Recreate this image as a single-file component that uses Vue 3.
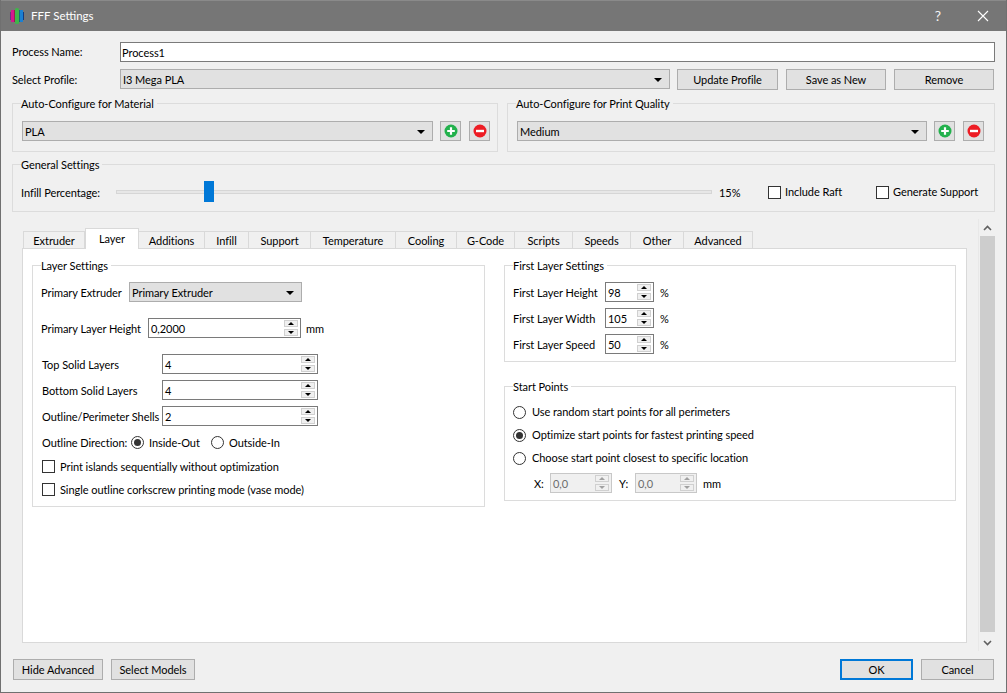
<script setup>
const tabs = [
  { label: 'Extruder', w: 62 }, { label: 'Layer', w: 54, active: true }, { label: 'Additions', w: 66 },
  { label: 'Infill', w: 44 }, { label: 'Support', w: 62 }, { label: 'Temperature', w: 85 },
  { label: 'Cooling', w: 61 }, { label: 'G-Code', w: 58 }, { label: 'Scripts', w: 58 },
  { label: 'Speeds', w: 58 }, { label: 'Other', w: 53 }, { label: 'Advanced', w: 69 }
]
const solidRows = [
  { label: 'Top Solid Layers', value: '4' },
  { label: 'Bottom Solid Layers', value: '4' },
  { label: 'Outline/Perimeter Shells', value: '2' }
]
const firstRows = [
  { label: 'First Layer Height', value: '98' },
  { label: 'First Layer Width', value: '105' },
  { label: 'First Layer Speed', value: '50' }
]
</script>

<template>
  <div class="window">
    <header class="titlebar">
      <svg class="logo" width="14" height="16" viewBox="0 0 14 16">
        <rect x="0" y="4" width="1" height="8" fill="#6f2a86" />
        <rect x="1" y="2" width="3" height="12" fill="#d3188c" />
        <rect x="4" y="2" width="1" height="12" fill="#96204e" />
        <rect x="5" y="0" width="4" height="16" rx="1.5" fill="#3fb54a" />
        <rect x="9" y="2" width="1" height="12" fill="#15697c" />
        <rect x="10" y="2" width="3" height="12" fill="#1b80d2" />
        <rect x="13" y="4" width="1" height="8" fill="#143c80" />
      </svg>
      <span class="title-text">FFF Settings</span>
      <span class="help">?</span>
      <svg class="close" width="12" height="12" viewBox="0 0 12 12">
        <path d="M1 1 L11 11 M11 1 L1 11" stroke="#fff" stroke-width="1.1" fill="none" />
      </svg>
    </header>

    <main class="content">
      <div class="row name-row">
        <label class="top-label">Process Name:</label>
        <div class="field grow">Process1</div>
      </div>

      <div class="row profile-row">
        <label class="top-label">Select Profile:</label>
        <div class="combo profile-combo"><span>I3 Mega PLA</span><i class="caret"></i></div>
        <button class="btn update">Update Profile</button>
        <button class="btn save">Save as New</button>
        <button class="btn save">Remove</button>
      </div>

      <div class="auto-row">
        <section class="group auto material">
          <span class="legend">Auto-Configure for Material</span>
          <div class="combo auto-combo mat"><span>PLA</span><i class="caret"></i></div>
          <button class="icon-btn first">
            <svg width="14" height="14" viewBox="0 0 14 14"><circle cx="7" cy="7" r="6.5" fill="#22b14c" /><path d="M7 3.2v7.6M3.2 7h7.6" stroke="#fff" stroke-width="2.2" /></svg>
          </button>
          <button class="icon-btn second">
            <svg width="14" height="14" viewBox="0 0 14 14"><circle cx="7" cy="7" r="6.5" fill="#ed1c24" /><path d="M3 7h8" stroke="#fff" stroke-width="2.4" /></svg>
          </button>
        </section>
        <section class="group auto quality">
          <span class="legend">Auto-Configure for Print Quality</span>
          <div class="combo auto-combo qual"><span>Medium</span><i class="caret"></i></div>
          <button class="icon-btn first">
            <svg width="14" height="14" viewBox="0 0 14 14"><circle cx="7" cy="7" r="6.5" fill="#22b14c" /><path d="M7 3.2v7.6M3.2 7h7.6" stroke="#fff" stroke-width="2.2" /></svg>
          </button>
          <button class="icon-btn second">
            <svg width="14" height="14" viewBox="0 0 14 14"><circle cx="7" cy="7" r="6.5" fill="#ed1c24" /><path d="M3 7h8" stroke="#fff" stroke-width="2.4" /></svg>
          </button>
        </section>
      </div>

      <section class="group general">
        <span class="legend">General Settings</span>
        <label class="infill-label">Infill Percentage:</label>
        <div class="slider"><div class="groove"></div><div class="handle"></div></div>
        <span class="percent">15%</span>
        <span class="check raft"><i class="box"></i>Include Raft</span>
        <span class="check support"><i class="box"></i>Generate Support</span>
      </section>

      <div class="tabs-area">
        <div class="tabs-col">
          <nav class="tabbar">
            <div
              v-for="tab in tabs"
              :key="tab.label"
              class="tab"
              :class="{ active: tab.active }"
              :style="{ width: tab.w + 'px' }"
            >{{ tab.label }}</div>
          </nav>
          <div class="pane">
            <section class="group layer">
              <span class="legend">Layer Settings</span>
              <div class="line extruder-line">
                <label class="l-extruder">Primary Extruder</label>
                <div class="combo extruder-combo"><span>Primary Extruder</span><i class="caret"></i></div>
              </div>
              <div class="line height-line">
                <label class="l-height">Primary Layer Height</label>
                <div class="spin height-spin"><span>0,2000</span><div class="spinners"><b class="up"></b><b class="down"></b></div></div>
                <span class="unit-mm">mm</span>
              </div>
              <div v-for="(r, i) in solidRows" :key="r.label" class="line solid-line" :class="{ firstsolid: i === 0 }">
                <label class="l-solid">{{ r.label }}</label>
                <div class="spin solid-spin"><span>{{ r.value }}</span><div class="spinners"><b class="up"></b><b class="down"></b></div></div>
              </div>
              <div class="line dir-line">
                <label class="l-dir">Outline Direction:</label>
                <span class="radio-item r-in"><i class="radio on"></i>Inside-Out</span>
                <span class="radio-item r-out"><i class="radio"></i>Outside-In</span>
              </div>
              <div class="check-line cl1"><i class="box"></i><span>Print islands sequentially without optimization</span></div>
              <div class="check-line cl2"><i class="box"></i><span>Single outline corkscrew printing mode (vase mode)</span></div>
            </section>

            <div class="right-col">
              <section class="group first-layer">
                <span class="legend">First Layer Settings</span>
                <div v-for="r in firstRows" :key="r.label" class="line first-line">
                  <label class="l-first">{{ r.label }}</label>
                  <div class="spin first-spin"><span>{{ r.value }}</span><div class="spinners"><b class="up"></b><b class="down"></b></div></div>
                  <span class="unit-pct">%</span>
                </div>
              </section>
              <section class="group start">
                <span class="legend">Start Points</span>
                <div class="start-line s1"><i class="radio"></i>Use random start points for all perimeters</div>
                <div class="start-line s2"><i class="radio on"></i>Optimize start points for fastest printing speed</div>
                <div class="start-line s3"><i class="radio"></i>Choose start point closest to specific location</div>
                <div class="line xy-line">
                  <label class="l-x">X:</label>
                  <div class="spin xy-spin disabled"><span>0,0</span><div class="spinners"><b class="up"></b><b class="down"></b></div></div>
                  <label class="l-y">Y:</label>
                  <div class="spin xy-spin disabled"><span>0,0</span><div class="spinners"><b class="up"></b><b class="down"></b></div></div>
                  <span class="unit-xy">mm</span>
                </div>
              </section>
            </div>
          </div>
        </div>
        <div class="scrollbar">
          <svg width="9" height="6" viewBox="0 0 9 6"><path d="M1 5 L4.5 1.5 L8 5" stroke="#606060" stroke-width="1.6" fill="none" /></svg>
          <div class="thumb"></div>
          <svg width="9" height="6" viewBox="0 0 9 6"><path d="M1 1 L4.5 4.5 L8 1" stroke="#606060" stroke-width="1.6" fill="none" /></svg>
        </div>
      </div>

      <footer class="footer">
        <button class="btn hide">Hide Advanced</button>
        <button class="btn models">Select Models</button>
        <span class="spacer"></span>
        <button class="btn ok">OK</button>
        <button class="btn cancel">Cancel</button>
      </footer>
    </main>
  </div>
</template>

<style>
html, body { margin: 0; background: #f0f0f0; }
</style>

<style scoped>
* { box-sizing: border-box; }
.window {
  width: 1007px; height: 693px; display: flex; flex-direction: column;
  font: 11px/16px Lato, "Noto Sans", sans-serif; letter-spacing: -0.06px; color: #000;
  background: #f0f0f0; border: 1px solid #707070; border-top: 0; overflow: hidden;
  white-space: nowrap;
}
.titlebar { height: 31px; background: #767676; color: #fff; display: flex; align-items: center; flex: none; border-top: 1px solid #8a8a8a; }
.logo { margin-left: 9px; }
.title-text { margin-left: 7px; font-size: 11.5px; letter-spacing: 0; }
.help { margin-left: auto; margin-right: 0; font-size: 14px; color: #f4f4f4; }
.close { margin-left: 36px; margin-right: 17px; }
.content { flex: 1; padding: 11px 11px 0; min-height: 0; }
.row { display: flex; align-items: center; }
.name-row { height: 20px; }
.top-label { width: 108px; }
.grow { flex: 1; }
.field { height: 20px; border: 1px solid #7a7a7a; background: #fff; padding-left: 1px; line-height: 19px; }
.profile-row { margin-top: 7px; height: 21px; align-items: flex-start; padding-right: 1px; }
.profile-row .top-label { line-height: 21px; }
.combo {
  height: 20px; background: #e1e1e1; border: 1px solid #adadad; display: flex; align-items: center;
  justify-content: space-between; padding: 1px 7px 0 2px; flex: none;
}
.profile-combo { width: 550px; }
.caret { width: 0; height: 0; border: 4px solid transparent; border-top: 4px solid #000; border-bottom: 0; }
.btn {
  font: inherit; letter-spacing: inherit; color: #000; height: 21px; background: #e1e1e1; border: 1px solid #adadad; padding: 0; flex: none;
}
.update { width: 101px; margin-left: 7px; }
.save { width: 100px; margin-left: 8px; }

.group { position: relative; border: 1px solid #dcdcdc; }
.legend { position: absolute; top: -7px; left: 8px; background: #f0f0f0; line-height: 14px; padding-right: 3px; }
.auto-row { display: flex; gap: 9px; margin-top: 13px; }
.auto { height: 49px; display: flex; align-items: flex-start; padding: 17px 0 0 9px; }
.material { width: 486px; }
.quality { width: 488px; }
.mat { width: 411px; }
.qual { width: 410px; }
.icon-btn {
  width: 21px; height: 20px; background: #e1e1e1; border: 1px solid #adadad; padding: 0; display: flex; align-items: center; justify-content: center; flex: none;
}
.first { margin-left: 7px; }
.second { margin-left: 8px; }

.general { margin-top: 12px; height: 48px; display: flex; align-items: flex-start; padding-left: 8px; }
.infill-label { margin-top: 20px; width: 95px; }
.slider { position: relative; width: 596px; height: 21px; margin-top: 16px; }
.groove { position: absolute; left: 0; right: 0; top: 9px; height: 4px; background: #e7e7e7; border: 1px solid #d6d6d6; }
.handle { position: absolute; left: 88px; top: 0; width: 10px; height: 21px; background: #0078d7; }
.percent { margin: 20px 0 0 7px; width: 49px; }
.check { display: flex; align-items: center; margin-top: 19px; }
.box { width: 13px; height: 13px; border: 1px solid #333; background: #fff; flex: none; margin-right: 4px; }
.raft { width: 108px; }

.tabs-area { display: flex; margin-top: 7px; height: 432px; }
.tabs-col { margin-left: 10px; width: 945px; padding-top: 9px; }
.tabbar { display: flex; height: 20px; padding-left: 1px; position: relative; z-index: 1; align-items: flex-end; }
.tab {
  height: 17px; background: #f0f0f0; border: 1px solid #d9d9d9; border-bottom: 0; border-left: 0; text-align: center; line-height: 18px; flex: none;
}
.tab:first-child { border-left: 1px solid #d9d9d9; }
.tab.active { height: 21px; margin-bottom: -1px; background: #fff; border-left: 1px solid #d9d9d9; line-height: 20px; }
.pane { height: 395px; background: #fff; border: 1px solid #d9d9d9; display: flex; align-items: flex-start; padding: 16px 0 0 9px; gap: 19px; }
.pane .legend { background: #fff; }
.layer { width: 453px; height: 242px; padding: 16px 0 0 8px; }
.line { display: flex; align-items: center; height: 20px; }
.line label, .line > span { padding-top: 1px; }
.l-extruder { width: 88px; }
.extruder-combo { width: 173px; }
.height-line { margin-top: 16px; }
.l-height { width: 107px; }
.spin { height: 20px; border: 1px solid #7a7a7a; background: #fff; display: flex; align-items: center; justify-content: space-between; padding: 0 1px 0 2px; flex: none; line-height: 18px; }
.spin > span { padding-top: 1px; }
.height-spin { width: 153px; }
.unit-mm { margin-left: 5px; }
.solid-line { margin-top: 6px; padding-left: 1px; }
.firstsolid { margin-top: 16px; }
.l-solid { width: 120px; }
.solid-spin { width: 156px; }
.spinners { width: 14px; height: 16px; display: flex; flex-direction: column; gap: 2px; flex: none; margin-right: 1px; }
.spinners b { position: relative; display: block; height: 7px; background: #f0f0f0; border: 1px solid #d0d0d0; }
.spinners b::after { content: ""; position: absolute; left: 3px; width: 0; height: 0; border-left: 3px solid transparent; border-right: 3px solid transparent; }
.spinners .up::after { top: 1px; border-bottom: 3px solid #000; }
.spinners .down::after { top: 1px; border-top: 3px solid #000; }
.dir-line { margin-top: 6px; padding-left: 1px; }
.l-dir { width: 89px; }
.radio-item { display: flex; align-items: center; }
.r-in { width: 80px; }
.radio { position: relative; display: block; width: 13px; height: 13px; border: 1px solid #333; border-radius: 50%; background: #fff; margin-right: 5px; flex: none; }
.radio.on::after { content: ""; position: absolute; left: 2px; top: 2px; width: 7px; height: 7px; border-radius: 50%; background: #333; }
.check-line { display: flex; align-items: center; height: 16px; padding-left: 1px; }
.check-line .box { margin-right: 5px; }
.check-line span { padding-top: 1px; }
.cl1 { margin-top: 6px; }
.cl2 { margin-top: 7px; }
.right-col { width: 452px; }
.first-layer { height: 97px; padding: 16px 0 0 8px; }
.first-line { margin-bottom: 6px; }
.l-first { width: 92px; }
.first-spin { width: 49px; }
.unit-pct { margin-left: 6px; }
.start { margin-top: 24px; height: 115px; padding: 17px 0 0 8px; }
.start-line { display: flex; align-items: center; height: 16px; margin-bottom: 7px; }
.start-line .radio { margin-right: 6px; }
.xy-line { margin-left: 21px; }
.l-x { width: 16px; }
.l-y { width: 16px; margin-left: 7px; }
.xy-spin { width: 62px; }
.unit-xy { margin-left: 6px; }
.disabled { background: #f0f0f0; border-color: #c8c8c8; color: #6d6d6d; }
.disabled .spinners .up::after { border-bottom-color: #a0a0a0; }
.disabled .spinners .down::after { border-top-color: #a0a0a0; }

.scrollbar { width: 17px; margin-left: 11px; display: flex; flex-direction: column; align-items: center; border-left: 1px solid #e8e8e8; padding-top: 6px; height: 432px; }
.thumb { width: 15px; height: 396px; background: #cdcdcd; margin: 5px 0 8px; }

.footer { display: flex; margin-top: 8px; padding: 0 1px; }
.hide { width: 90px; }
.models { width: 84px; margin-left: 8px; }
.spacer { flex: 1; }
.ok { width: 73px; border: 2px solid #0078d7; }
.cancel { width: 73px; margin-left: 8px; }
</style>
